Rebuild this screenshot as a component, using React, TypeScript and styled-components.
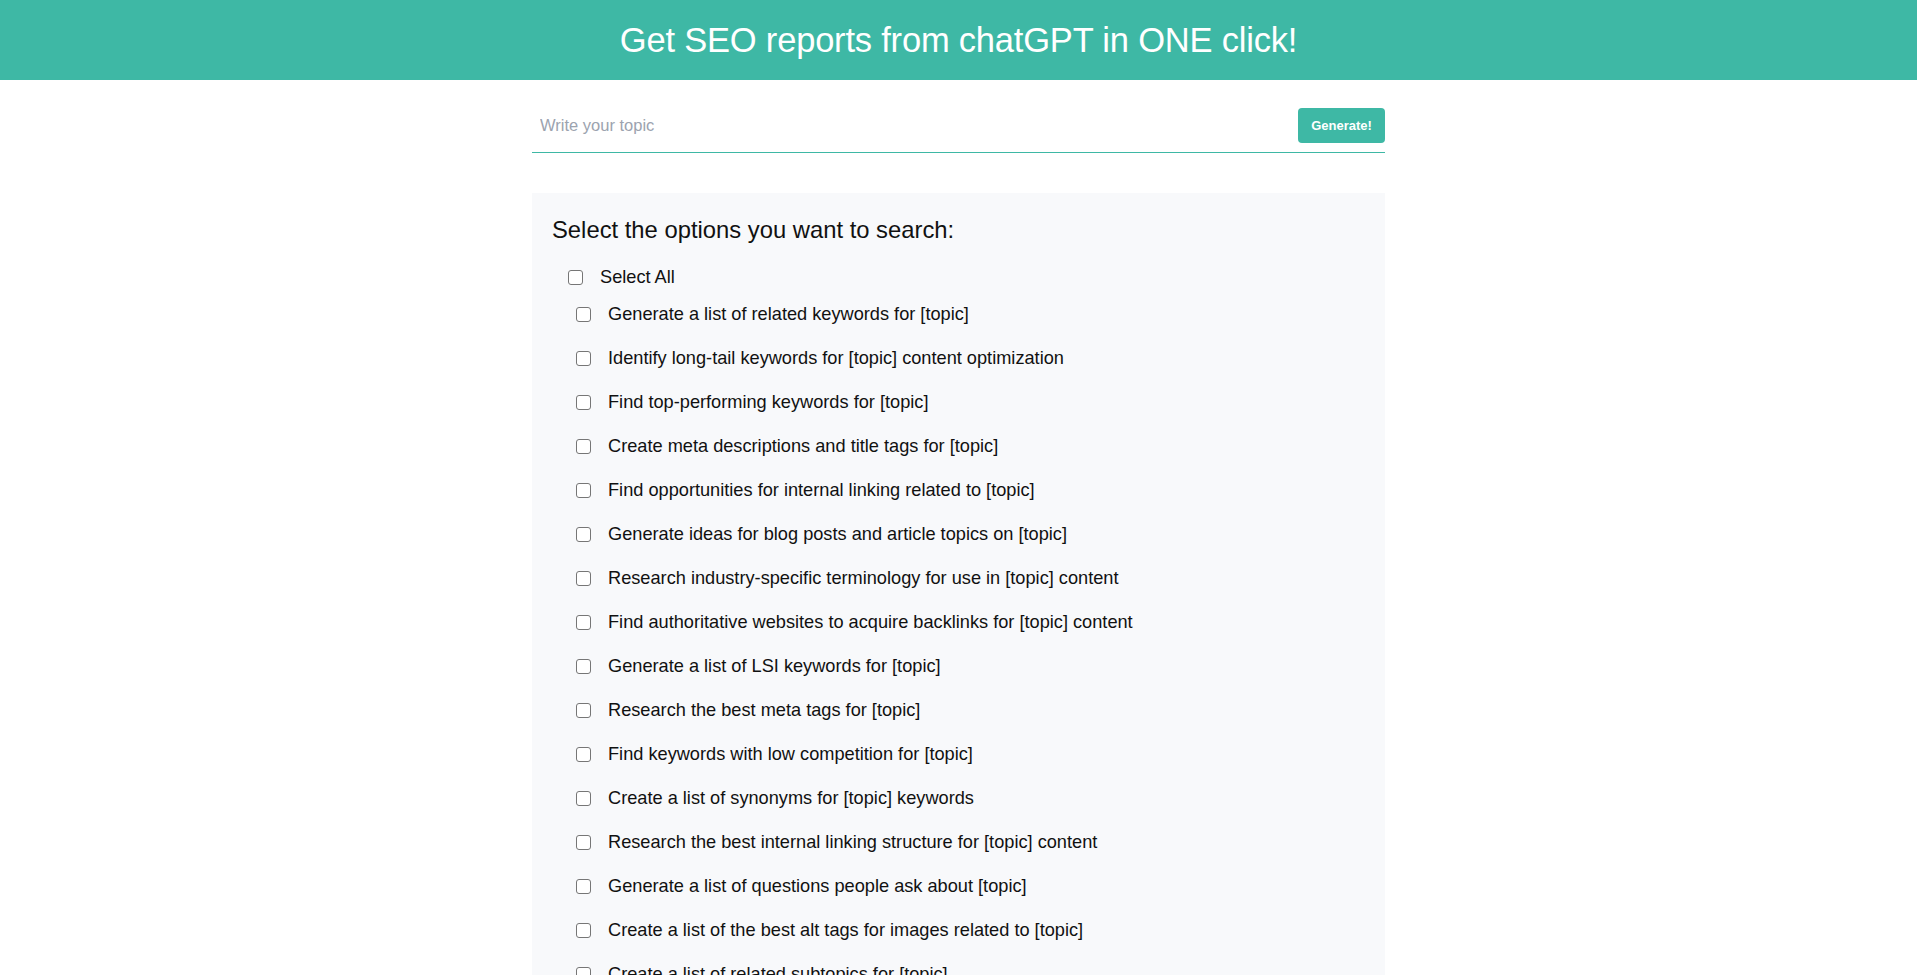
import React from "react";
import styled, { createGlobalStyle } from "styled-components";

const Global = createGlobalStyle`
  html, body { margin: 0; padding: 0; background: #ffffff; }
  body { font-family: "Liberation Sans", Arial, Helvetica, sans-serif; color: #111111; }
  * { box-sizing: border-box; }
`;

const Header = styled.header`
  height: 80px;
  background: #3eb8a5;
  display: flex;
  align-items: center;
  justify-content: center;
`;

const Title = styled.h1`
  margin: 0;
  color: #ffffff;
  font-size: 34.5px;
  font-weight: 400;
  letter-spacing: -0.2px;
`;

const Main = styled.main`
  width: 853px;
  margin: 0 auto;
  padding-top: 28px;
`;

const SearchRow = styled.form`
  display: flex;
  align-items: center;
  gap: 8px;
  padding-bottom: 9px;
  border-bottom: 1px solid #3eb8a5;
`;

const TopicInput = styled.input`
  flex: 1;
  height: 35px;
  border: none;
  outline: none;
  background: transparent;
  padding: 0 8px;
  font-family: "Liberation Sans", Arial, sans-serif;
  font-size: 16.5px;
  color: #111;
  &::placeholder { color: #9ca3af; }
`;

const GenerateButton = styled.button`
  width: 87px;
  height: 35px;
  border: none;
  border-radius: 4px;
  background: #3eb8a5;
  color: #ffffff;
  font-family: "Liberation Sans", Arial, sans-serif;
  font-size: 13px;
  font-weight: 700;
  cursor: pointer;
`;

const Panel = styled.section`
  margin-top: 40px;
  background: #f8f9fb;
  padding: 21px 20px 20px;
`;

const PanelTitle = styled.h2`
  margin: 0 0 16px;
  font-size: 23.8px;
  font-weight: 400;
  line-height: 32px;
  color: #111;
`;

const OptionList = styled.div`
  display: flex;
  flex-direction: column;
`;

const OptionRow = styled.label<{ $indent: number; $height: number }>`
  display: flex;
  align-items: center;
  gap: 17px;
  height: ${(p) => p.$height}px;
  padding-left: ${(p) => p.$indent}px;
  font-size: 18.2px;
  color: #111;
  cursor: pointer;
`;

const Box = styled.input`
  appearance: none;
  -webkit-appearance: none;
  margin: 0;
  width: 15px;
  height: 15px;
  flex: none;
  background: #ffffff;
  border: 1px solid #767676;
  border-radius: 3px;
  cursor: pointer;
  &:checked { background: #3eb8a5; border-color: #3eb8a5; }
`;

const options = [
  "Generate a list of related keywords for [topic]",
  "Identify long-tail keywords for [topic] content optimization",
  "Find top-performing keywords for [topic]",
  "Create meta descriptions and title tags for [topic]",
  "Find opportunities for internal linking related to [topic]",
  "Generate ideas for blog posts and article topics on [topic]",
  "Research industry-specific terminology for use in [topic] content",
  "Find authoritative websites to acquire backlinks for [topic] content",
  "Generate a list of LSI keywords for [topic]",
  "Research the best meta tags for [topic]",
  "Find keywords with low competition for [topic]",
  "Create a list of synonyms for [topic] keywords",
  "Research the best internal linking structure for [topic] content",
  "Generate a list of questions people ask about [topic]",
  "Create a list of the best alt tags for images related to [topic]",
  "Create a list of related subtopics for [topic]",
  "Find the most popular questions about [topic]",
  "Create a list of related long-tail phrases for [topic]",
];

export default function App() {
  return (
    <>
      <Global />
      <Header>
        <Title>Get SEO reports from chatGPT in ONE click!</Title>
      </Header>
      <Main>
        <SearchRow onSubmit={(e) => e.preventDefault()}>
          <TopicInput placeholder="Write your topic" />
          <GenerateButton type="submit">Generate!</GenerateButton>
        </SearchRow>
        <Panel>
          <PanelTitle>Select the options you want to search:</PanelTitle>
          <OptionList>
            <OptionRow $indent={16} $height={30}>
              <Box type="checkbox" />
              Select All
            </OptionRow>
            {options.map((o) => (
              <OptionRow key={o} $indent={24} $height={44}>
                <Box type="checkbox" />
                {o}
              </OptionRow>
            ))}
          </OptionList>
        </Panel>
      </Main>
    </>
  );
}
